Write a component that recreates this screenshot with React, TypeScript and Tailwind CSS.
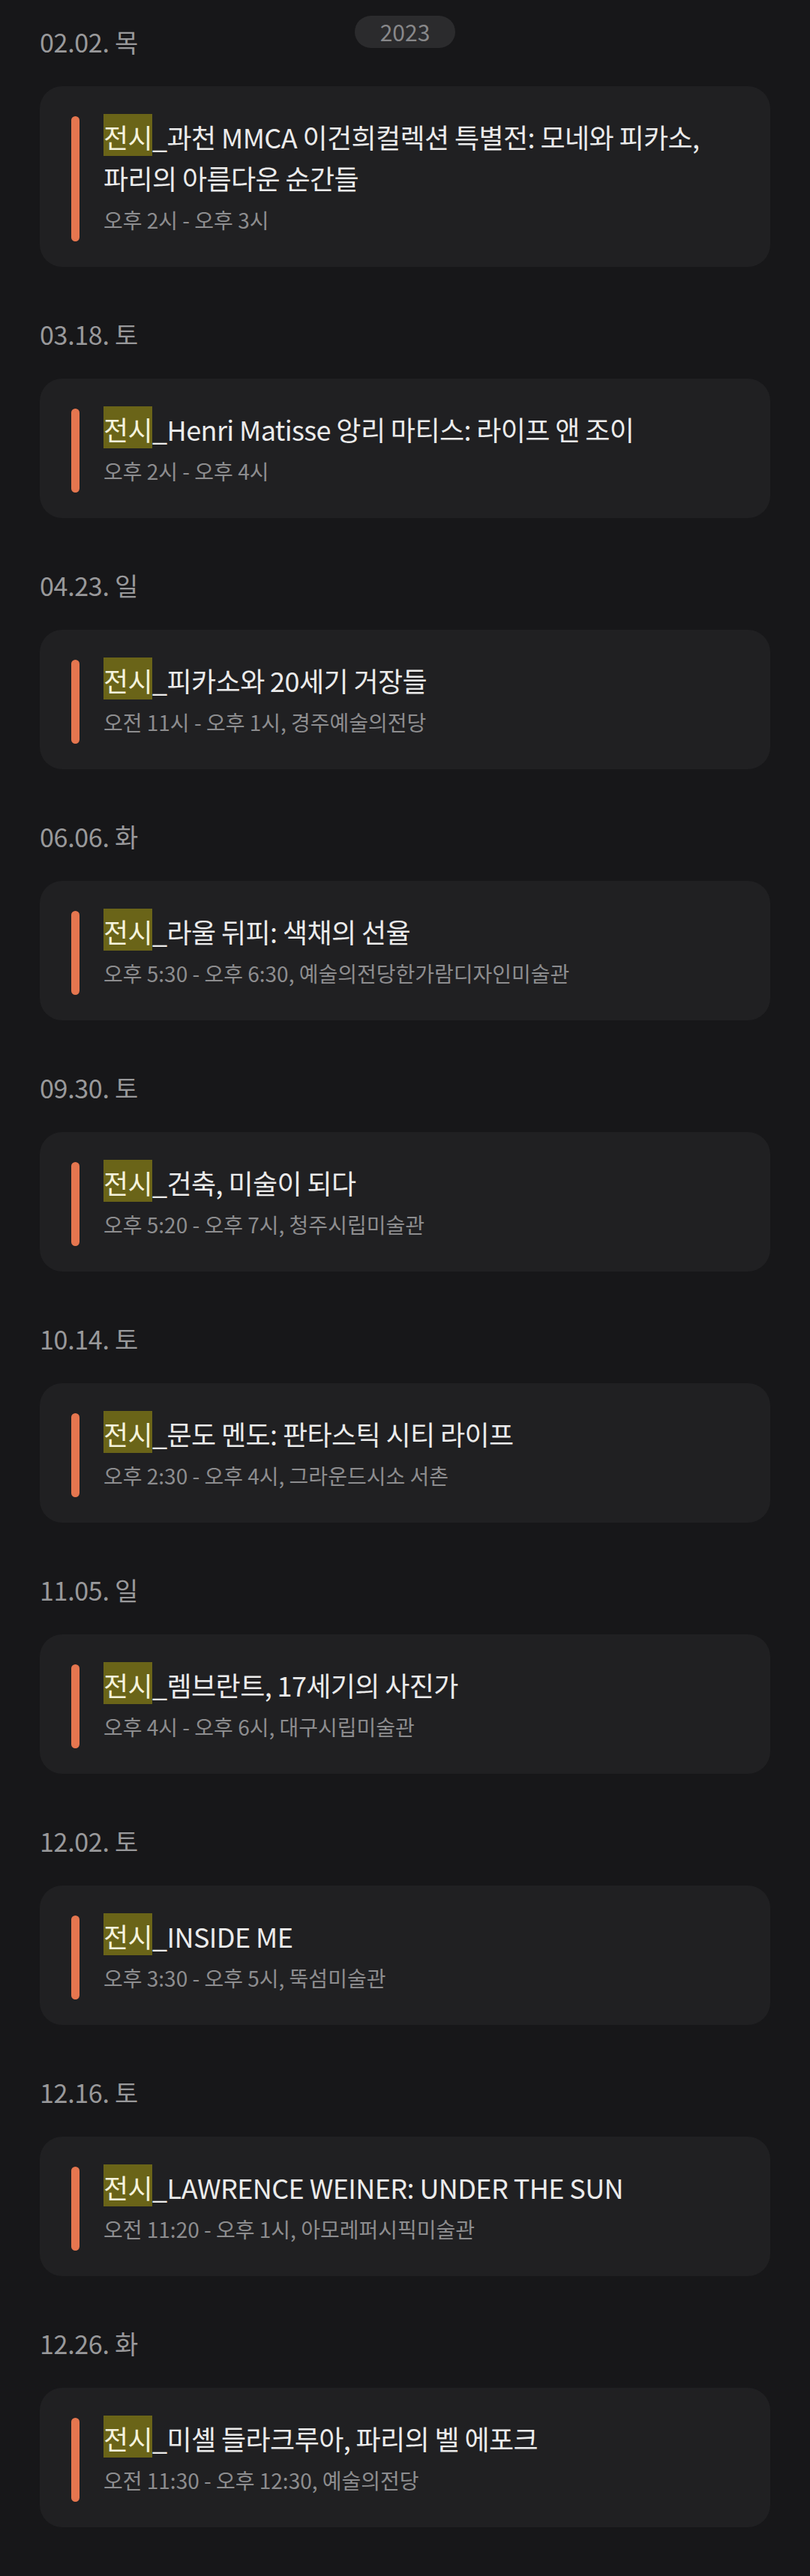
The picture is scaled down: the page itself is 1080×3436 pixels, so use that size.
import React from "react";

type Ev = { date: string; title: string; time: string };

const events: Ev[] = [
  { date: "02.02. 목", title: "과천 MMCA 이건희컬렉션 특별전: 모네와 피카소, 파리의 아름다운 순간들", time: "오후 2시 - 오후 3시" },
  { date: "03.18. 토", title: "Henri Matisse 앙리 마티스: 라이프 앤 조이", time: "오후 2시 - 오후 4시" },
  { date: "04.23. 일", title: "피카소와 20세기 거장들", time: "오전 11시 - 오후 1시, 경주예술의전당" },
  { date: "06.06. 화", title: "라울 뒤피: 색채의 선율", time: "오후 5:30 - 오후 6:30, 예술의전당한가람디자인미술관" },
  { date: "09.30. 토", title: "건축, 미술이 되다", time: "오후 5:20 - 오후 7시, 청주시립미술관" },
  { date: "10.14. 토", title: "문도 멘도: 판타스틱 시티 라이프", time: "오후 2:30 - 오후 4시, 그라운드시소 서촌" },
  { date: "11.05. 일", title: "렘브란트, 17세기의 사진가", time: "오후 4시 - 오후 6시, 대구시립미술관" },
  { date: "12.02. 토", title: "INSIDE ME", time: "오후 3:30 - 오후 5시, 뚝섬미술관" },
  { date: "12.16. 토", title: "LAWRENCE WEINER: UNDER THE SUN", time: "오전 11:20 - 오후 1시, 아모레퍼시픽미술관" },
  { date: "12.26. 화", title: "미셸 들라크루아, 파리의 벨 에포크", time: "오전 11:30 - 오후 12:30, 예술의전당" },
];

function Card({ ev }: { ev: Ev }) {
  return (
    <div className="flex rounded-[30px] bg-[#202022] pt-[40px] pb-[34px] pl-[42px] pr-[36px]">
      <div className="w-[11px] shrink-0 self-stretch rounded-full bg-[#e5764f]" />
      <div className="ml-[32px] flex min-w-0 flex-col">
        <div className="break-keep text-[36px] leading-[55px] text-[#ebebeb] tracking-[-0.6px]">
          <span className="bg-[#6a6418] pt-[4px] text-[#f4f2dc]">전시</span>_{ev.title}
        </div>
        <div className="text-[28px] leading-[57px] text-[#8d8d8f]">{ev.time}</div>
      </div>
    </div>
  );
}

export default function App() {
  return (
    <div
      className="relative min-h-[3436px] w-[1080px] bg-[#171719] px-[53px] pt-[32px] pb-[66px]"
      style={{ fontFamily: '"Noto Sans CJK KR", "Noto Sans", sans-serif' }}
    >
      <div className="absolute left-[473px] top-[21px] flex h-[43px] w-[134px] items-center justify-center rounded-full bg-[#2b2b2d] text-[30px] text-[#88888a]">
        2023
      </div>
      {events.map((ev, i) => (
        <div key={i} className={i === 0 ? "" : "mt-[66px]"}>
          <div className="mb-[35px] h-[48px] text-[34px] leading-[48px] text-[#99999b] tracking-[-0.3px]">{ev.date}</div>
          <Card ev={ev} />
        </div>
      ))}
    </div>
  );
}
